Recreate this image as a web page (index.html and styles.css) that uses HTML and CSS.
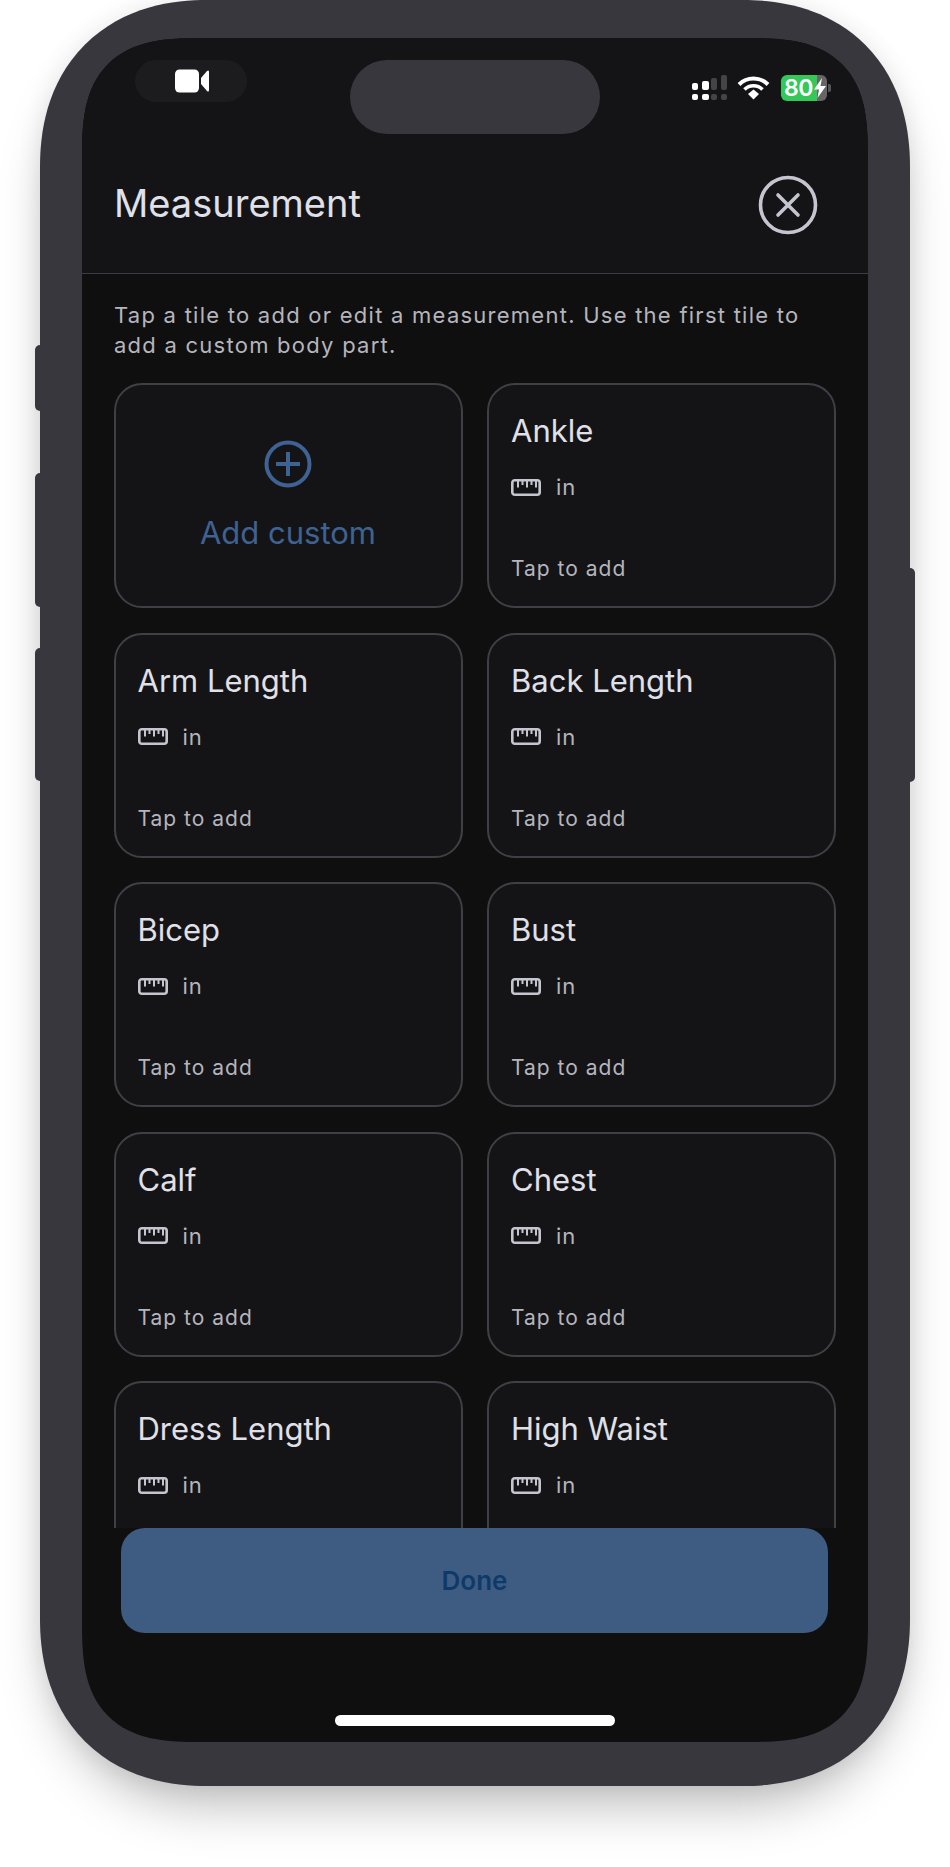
FILE: index.html
```html
<!DOCTYPE html>
<html lang="en">
<head>
  <meta charset="UTF-8" />
  <title>Measurement</title>
  <link rel="stylesheet" href="styles.css">
</head>
<body>
  <svg class="defs" width="0" height="0">
    <symbol id="ruler" viewBox="0 0 30 17">
      <rect x="1.300" y="1.300" width="27.400" height="14.400" rx="2.500" fill="none" stroke="currentColor" stroke-width="2.600"/>
      <path d="M7 2v6.500M11.500 2v4M16 2v6.500M20.500 2v4M25 2v6.500" fill="none" stroke="currentColor" stroke-width="2"/>
    </symbol>
  </svg>
  <div class="phone">
    <span class="side-btn btn-mute"></span>
    <span class="side-btn btn-up"></span>
    <span class="side-btn btn-down"></span>
    <span class="side-btn btn-power"></span>
    <div class="screen">
      <header class="header">
        <div class="status">
          <div class="rec-pill">
            <svg width="36" height="24" viewBox="0 0 36 24">
              <rect x="1" y="0.500" width="24" height="23" rx="4.500" fill="#fff"/>
              <path d="M27 9 33 2Q35 .5 35 3V21Q35 23.500 33 22L27 15Z" fill="#fff"/>
            </svg>
          </div>
          <div class="island"></div>
          <div class="status-right">
            <svg width="36" height="26" viewBox="0 0 36 26">
              <rect x="0" y="8" width="6" height="7" rx="2" fill="#fff"/>
              <rect x="10" y="6" width="7" height="9" rx="2" fill="#fff"/>
              <rect x="19" y="3" width="6" height="12" rx="2" fill="#444"/>
              <rect x="29" y="0" width="6" height="15" rx="2" fill="#444"/>
              <rect x="0" y="19" width="6" height="6" rx="2" fill="#fff"/>
              <rect x="10" y="19" width="7" height="6" rx="2" fill="#fff"/>
              <rect x="19" y="19" width="6" height="6" rx="2" fill="#444"/>
              <rect x="29" y="19" width="6" height="6" rx="2" fill="#444"/>
            </svg>
            <svg class="wifi" width="33" height="24" viewBox="0 0 33 24">
              <path d="M2 8.500C10 .5 23 .5 31 8.500" fill="none" stroke="#fff" stroke-width="4"/>
              <path d="M7.500 13.500C12.500 8.500 20.500 8.500 25.500 13.500" fill="none" stroke="#fff" stroke-width="3.600"/>
              <path d="M11 18 16.500 13.500 22 18 16.500 23.500Z" fill="#fff"/>
            </svg>
            <div class="battery">
              <span>80</span>
              <svg width="12" height="20" viewBox="0 0 12 20"><path d="M8 0 0 11.500H5L3.500 20 12 8H6.500Z" fill="#fff"/></svg>
            </div>
            <span class="battery-nub"></span>
          </div>
        </div>
        <div class="title-row">
          <h1>Measurement</h1>
          <svg width="60" height="60" viewBox="0 0 60 60">
            <circle cx="30" cy="30" r="27.500" fill="none" stroke="#c5c5cf" stroke-width="3.600"/>
            <path d="M20 20 40 40M40 20 20 40" fill="none" stroke="#c5c5cf" stroke-width="3.600" stroke-linecap="round"/>
          </svg>
        </div>
      </header>
      <main class="content">
        <p class="hint">Tap a tile to add or edit a measurement. Use the first tile to add a custom body part.</p>
        <div class="tiles">
          <div class="tile tile-add">
            <svg width="48" height="48" viewBox="0 0 48 48">
              <circle cx="24" cy="24" r="21.500" fill="none" stroke="currentColor" stroke-width="4"/>
              <path d="M12 24H36M24 12V36" fill="none" stroke="currentColor" stroke-width="4"/>
            </svg>
            <span>Add custom</span>
          </div>
          <div class="tile">
            <div class="tile-name">Ankle</div>
            <div class="tile-unit"><svg><use href="#ruler"/></svg>in</div>
            <div class="tile-tap">Tap to add</div>
          </div>
          <div class="tile">
            <div class="tile-name">Arm Length</div>
            <div class="tile-unit"><svg><use href="#ruler"/></svg>in</div>
            <div class="tile-tap">Tap to add</div>
          </div>
          <div class="tile">
            <div class="tile-name">Back Length</div>
            <div class="tile-unit"><svg><use href="#ruler"/></svg>in</div>
            <div class="tile-tap">Tap to add</div>
          </div>
          <div class="tile">
            <div class="tile-name">Bicep</div>
            <div class="tile-unit"><svg><use href="#ruler"/></svg>in</div>
            <div class="tile-tap">Tap to add</div>
          </div>
          <div class="tile">
            <div class="tile-name">Bust</div>
            <div class="tile-unit"><svg><use href="#ruler"/></svg>in</div>
            <div class="tile-tap">Tap to add</div>
          </div>
          <div class="tile">
            <div class="tile-name">Calf</div>
            <div class="tile-unit"><svg><use href="#ruler"/></svg>in</div>
            <div class="tile-tap">Tap to add</div>
          </div>
          <div class="tile">
            <div class="tile-name">Chest</div>
            <div class="tile-unit"><svg><use href="#ruler"/></svg>in</div>
            <div class="tile-tap">Tap to add</div>
          </div>
          <div class="tile">
            <div class="tile-name">Dress Length</div>
            <div class="tile-unit"><svg><use href="#ruler"/></svg>in</div>
          </div>
          <div class="tile">
            <div class="tile-name">High Waist</div>
            <div class="tile-unit"><svg><use href="#ruler"/></svg>in</div>
          </div>
        </div>
      </main>
      <footer class="footer">
        <button class="done">Done</button>
        <div class="home-bar"></div>
      </footer>
    </div>
  </div>
</body>
</html>
```

FILE: styles.css
```css
* {
  box-sizing: border-box;
}
body {
  margin: 0;
  min-height: 1867px;
  background: #fff;
  font-family: Inter, "Liberation Sans", sans-serif;
}
.defs {
  position: absolute;
}
.phone {
  position: relative;
  width: 870px;
  height: 1786px;
  margin-left: 40px;
  padding: 38px 42px 44px;
  background: #38373d;
  border-radius: 167px;
  corner-shape: superellipse(1.15);
  box-shadow: 0 30px 50px -10px rgba(0, 0, 0, 0.25), 0 0 24px rgba(0, 0, 0, 0.08);
}
.side-btn {
  position: absolute;
  width: 5px;
  background: #38373d;
  border-radius: 5px 0 0 5px;
}
.btn-mute {
  left: -5px;
  top: 345px;
  height: 66px;
}
.btn-up {
  left: -5px;
  top: 473px;
  height: 134px;
}
.btn-down {
  left: -5px;
  top: 648px;
  height: 133px;
}
.btn-power {
  right: -5px;
  top: 568px;
  height: 214px;
  border-radius: 0 5px 5px 0;
}
.screen {
  display: flex;
  flex-direction: column;
  height: 100%;
  overflow: hidden;
  background: #0f0f0f;
  border-radius: 120px;
  corner-shape: superellipse(1.5);
}
.header {
  background: #141417;
  border-bottom: 1px solid #3c3d44;
}
.status {
  position: relative;
  display: flex;
  justify-content: space-between;
  align-items: flex-start;
  height: 96px;
  padding: 22px 37px 0 53px;
}
.rec-pill {
  display: flex;
  align-items: center;
  justify-content: center;
  width: 112px;
  height: 42px;
  padding-left: 2px;
  background: #1c1c1e;
  border-radius: 21px;
}
.island {
  position: absolute;
  left: 268px;
  top: 22px;
  width: 250px;
  height: 74px;
  background: #38373d;
  border-radius: 37px;
}
.status-right {
  display: flex;
  align-items: center;
  margin-top: 15px;
}
.wifi {
  margin-left: 9px;
}
.battery {
  display: flex;
  align-items: center;
  width: 46px;
  height: 26px;
  margin-left: 11px;
  padding-left: 3px;
  background: linear-gradient(to right, #34c759 78%, #666 78%);
  border-radius: 6px;
  color: #fff;
  font-size: 23px;
  font-weight: 600;
  letter-spacing: -0.5px;
}
.battery svg {
  margin-left: 1px;
}
.battery-nub {
  width: 3px;
  height: 8px;
  margin-left: 1px;
  background: #555;
  border-radius: 0 2px 2px 0;
}
.title-row {
  display: flex;
  justify-content: space-between;
  align-items: center;
  height: 139px;
  padding: 3px 50px 0 32px;
}
h1 {
  margin: 0 0 4px;
  font-size: 38px;
  font-weight: 400;
  color: #e0e0e8;
}
.content {
  flex: 1;
  min-height: 0;
  overflow: hidden;
  padding: 26px 32px 0 31.500px;
}
.hint {
  margin: 0 0 23px;
  padding-left: 0.500px;
  font-size: 22px;
  line-height: 30px;
  letter-spacing: 1.250px;
  color: #b5b5bd;
}
.tiles {
  display: grid;
  grid-template-columns: 1fr 1fr;
  grid-auto-rows: 225px;
  gap: 24.500px;
}
.tile {
  display: flex;
  flex-direction: column;
  padding: 28px 22px 23px;
  background: #141417;
  border: 2px solid #3f4045;
  border-radius: 28px;
}
.tile-add {
  align-items: center;
  justify-content: center;
  padding: 0 22px;
  color: #3e6291;
  font-size: 31px;
}
.tile-add span {
  margin-top: 26px;
}
.tile-name {
  font-size: 31px;
  line-height: 36px;
  color: #e0e0e8;
}
.tile-unit {
  display: flex;
  align-items: center;
  margin-top: 23px;
  font-size: 22px;
  line-height: 30px;
  letter-spacing: 0.8px;
  color: #b5b5bd;
}
.tile-unit svg {
  width: 30px;
  height: 17px;
  margin-right: 15px;
  color: #c5c5cf;
}
.tile-tap {
  margin-top: auto;
  font-size: 21px;
  line-height: 28px;
  letter-spacing: 1px;
  color: #b5b5bd;
}
.footer {
  display: flex;
  flex-direction: column;
  align-items: center;
  height: 214px;
}
.done {
  width: 707px;
  height: 105px;
  margin-right: 1px;
  border: none;
  border-radius: 24px;
  background: #3e5c82;
  color: #0e3a6a;
  font-family: inherit;
  font-size: 26px;
  font-weight: 600;
}
.home-bar {
  width: 280px;
  height: 11px;
  margin-top: 82px;
  background: #fff;
  border-radius: 6px;
}
```
